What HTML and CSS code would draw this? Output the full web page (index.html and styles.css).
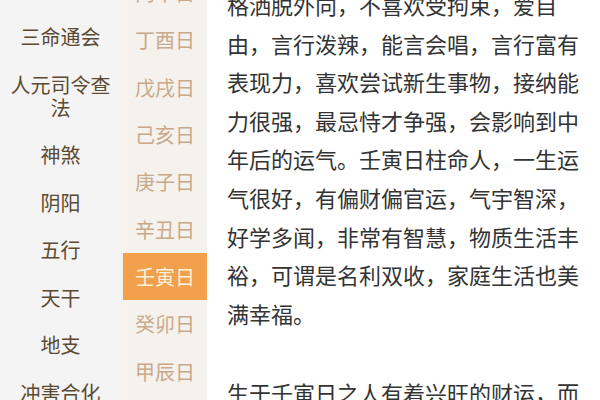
FILE: index.html
```html
<!DOCTYPE html>
<html lang="zh-CN">
<head>
<meta charset="utf-8">
<title>壬寅日</title>
<link rel="stylesheet" href="styles.css">
</head>
<body>
<div class="page">
  <nav class="nav">
    <div class="nav-item">三命通会</div>
    <div class="nav-item">人元司令查法</div>
    <div class="nav-item">神煞</div>
    <div class="nav-item">阴阳</div>
    <div class="nav-item">五行</div>
    <div class="nav-item">天干</div>
    <div class="nav-item">地支</div>
    <div class="nav-item">冲害合化</div>
  </nav>
  <div class="days">
    <div class="day-list">
      <div class="day">丙申日</div>
      <div class="day">丁酉日</div>
      <div class="day">戊戌日</div>
      <div class="day">己亥日</div>
      <div class="day">庚子日</div>
      <div class="day">辛丑日</div>
      <div class="day active">壬寅日</div>
      <div class="day">癸卯日</div>
      <div class="day">甲辰日</div>
    </div>
  </div>
  <main class="content">
    <p class="para">格洒脱外向，不喜欢受拘束，爱自由，言行泼辣，能言会唱，言行富有表现力，喜欢尝试新生事物，接纳能力很强，最忌恃才争强，会影响到中年后的运气。壬寅日柱命人，一生运气很好，有偏财偏官运，气宇智深，好学多闻，非常有智慧，物质生活丰裕，可谓是名利双收，家庭生活也美满幸福。</p>
    <p class="para">生于壬寅日之人有着兴旺的财运，而且事业运势也相当不错。</p>
  </main>
</div>
</body>
</html>
```

FILE: styles.css
```css
html, body {
  margin: 0;
  padding: 0;
  background: #ffffff;
}

body {
  font-family: "Noto Sans CJK SC", "Noto Sans", sans-serif;
}

.page {
  display: flex;
  width: 600px;
  height: 400px;
  overflow: hidden;
}

.nav {
  width: 121px;
  flex: 0 0 121px;
  background: #f4f4f4;
  display: flex;
  flex-direction: column;
  padding-top: 13px;
  box-sizing: border-box;
}

.nav-item {
  font-size: 20px;
  line-height: 23px;
  padding: 12.25px 10px;
  text-align: center;
  color: #5a4a32;
}

.days {
  width: 86px;
  flex: 0 0 86px;
  background: #f5f2ee;
  overflow: hidden;
  padding-left: 2px;
  box-sizing: border-box;
}

.day-list {
  display: flex;
  flex-direction: column;
  margin-top: -31px;
}

.day {
  height: 47.3px;
  display: flex;
  align-items: center;
  justify-content: center;
  font-size: 20px;
  color: #c9a98a;
}

.day.active {
  background: #f1a04b;
  color: #fff1da;
}

.content {
  flex: 1;
  padding: 0 15px 0 20px;
  color: #333333;
  overflow: hidden;
}

.para {
  font-size: 22px;
  line-height: 38.6px;
  margin: 0 0 41px;
}

.para:first-child {
  margin-top: -15px;
}
```
